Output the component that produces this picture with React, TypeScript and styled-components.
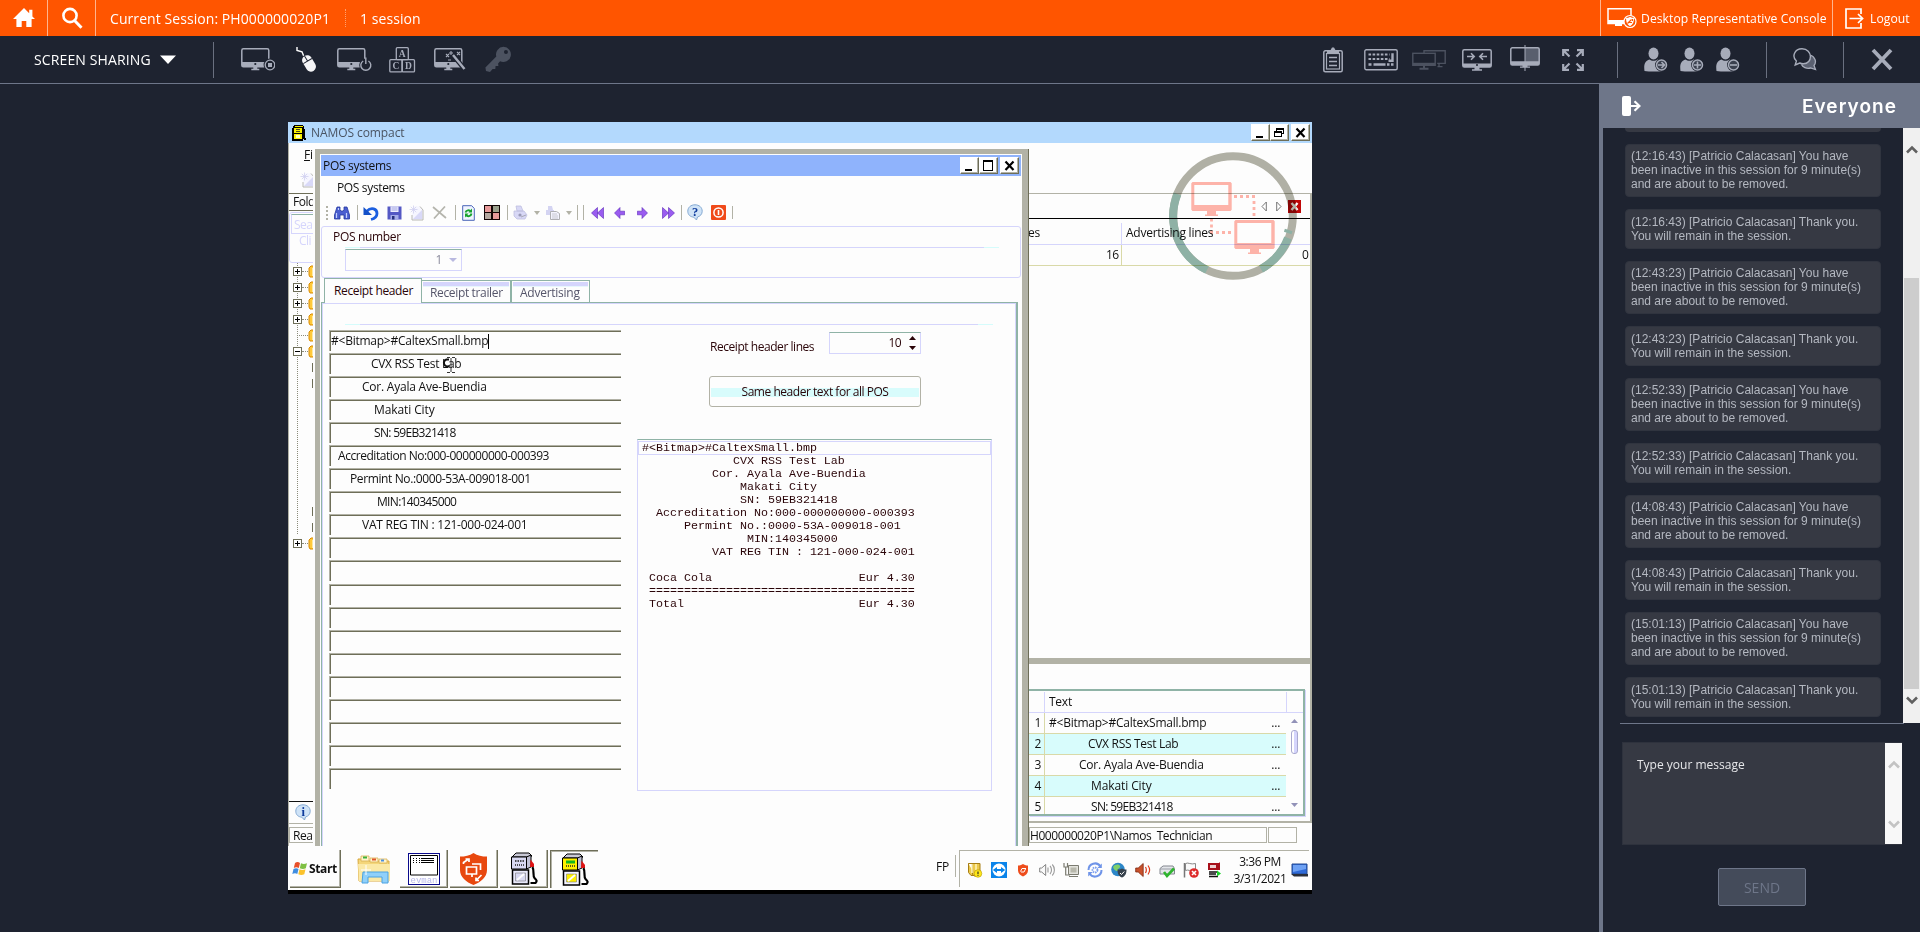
import React from 'react';
import styled, { createGlobalStyle, css } from 'styled-components';

const INK = '#a7acba';
const DIM = '#4c5260';
const STONE = '#b2b2a6';
const OLIVE = '#6e6e58';
const LAV = '#d5d5fc';
const SAGE = '#8fb3a6';
const PAPER = '#fdfdfd';
const MAROON = '#2a0408';

const Global = createGlobalStyle`
  *{box-sizing:border-box}
  body{margin:0;background:#1e2330;font-family:"Open Sans","Noto Sans",sans-serif;overflow:hidden}
  svg{display:block;flex:none}
`;

/* ---------- page shell ---------- */
const Page = styled.div`width:1920px;height:932px;display:flex;flex-direction:column;background:#1e2330;overflow:hidden;`;
const TopBar = styled.header`height:36px;flex:none;background:#ff5500;display:flex;align-items:stretch;color:#fff;`;
const TopCell = styled.div<{ $w: number; $edge?: 'l' | 'r' }>`
  width:${p => p.$w}px;display:flex;align-items:center;
  ${p => p.$edge === 'r' && css`border-right:1px solid #ffb48e;`}
  ${p => p.$edge === 'l' && css`border-left:1px solid #ffb48e;`}
`;
const IconCell = styled(TopCell)`justify-content:center;`;
const TopText = styled.span<{ $size?: number; $ml?: number }>`
  font-size:${p => p.$size ?? 14}px;letter-spacing:.07px;margin-left:${p => p.$ml ?? 0}px;white-space:pre;
`;
const DottedRule = styled.i`width:0;height:18px;border-left:1px dotted #ffa070;margin-left:15px;`;
const Spacer = styled.div`flex:1;`;
const ToolBar = styled.div`height:48px;flex:none;display:flex;align-items:center;border-bottom:1px solid #6e7689;`;
const ModeLabel = styled.div`width:213px;padding-left:34px;display:flex;align-items:center;gap:9px;color:#fff;font-size:14px;letter-spacing:.12px;`;
const Slot = styled.div<{ $ml: number }>`margin-left:${p => p.$ml}px;`;
const Rule = styled.i<{ $ml?: number }>`width:1px;height:36px;background:#6a7080;margin-left:${p => p.$ml ?? 0}px;`;
const Body = styled.div`flex:1;display:flex;min-height:0;`;
const Stage = styled.main`width:1599px;padding:38px 0 0 288px;`;

/* ---------- chat ---------- */
const Chat = styled.aside`width:321px;border-left:4px solid #6e7689;display:flex;flex-direction:column;`;
const ChatHead = styled.div`height:44px;flex:none;background:#6e7689;display:flex;align-items:center;justify-content:space-between;padding:0 23px 0 19px;`;
const ChatTitle = styled.h2`margin:0;font:600 19px Inter,sans-serif;letter-spacing:1.05px;color:#fff;`;
const ChatScroll = styled.div`height:595px;flex:none;display:flex;justify-content:space-between;overflow:hidden;`;
const Messages = styled.div`width:278px;padding-left:22px;display:flex;flex-direction:column;gap:12px;`;
const Message = styled.p<{ $lines: number }>`
  margin:0;flex:none;width:256px;border-radius:4px;background:#363943;color:#b4b8c1;
  font:12px/14px "Liberation Sans",Arial,sans-serif;white-space:pre;border:1px solid #30343f;
  height:${p => (p.$lines === 3 ? 53 : 40)}px;padding:${p => (p.$lines === 3 ? 4 : 5)}px 5px 0;
`;
const MessageTail = styled.div`height:4px;width:256px;flex:none;background:#363943;border-radius:0 0 4px 4px;`;
const ScrollBar = styled.div<{ $h: number; $bg: string; $pt: number; $pb: number }>`
  width:17px;height:${p => p.$h}px;background:${p => p.$bg};display:flex;flex-direction:column;align-items:center;
  padding:${p => p.$pt}px 0 ${p => p.$pb}px;
`;
const Thumb = styled.div`width:15px;height:411px;background:#cdcdcd;margin:124px 0 7px;`;
const ChatRule = styled.div`height:1px;flex:none;width:284px;margin-left:17px;background:#6e7689;`;
const Composer = styled.div`
  margin:18px 0 0 19px;width:280px;height:103px;flex:none;display:flex;justify-content:space-between;
  background:#363943;color:#e6e7ea;font-size:12px;padding-left:14px;border:1px solid #2e323d;border-width:1px 0 1px 1px;
`;
const Hint = styled.span`margin-top:13px;`;
const SendButton = styled.button`
  margin:23px 0 0 115px;width:88px;height:38px;border:1px solid #6e7689;border-radius:2px;background:#444b5a;
  color:#6e7689;font:14px "Open Sans",sans-serif;padding:0;
`;

/* ---------- remote desktop ---------- */
const Remote = styled.div`position:relative;width:1024px;height:772px;background:${PAPER};border-bottom:4px solid #000;overflow:hidden;font-size:12px;letter-spacing:-.25px;color:#111;display:flex;flex-direction:column;`;
const T = styled.span<{ $ls?: number; $c?: string; $ml?: number; $mt?: number; $w?: number }>`
  white-space:pre;line-height:16px;letter-spacing:${p => p.$ls ?? -.25}px;color:${p => p.$c ?? '#111'};
  margin-left:${p => p.$ml ?? 0}px;margin-top:${p => p.$mt ?? 0}px;${p => p.$w && css`width:${p.$w}px;`}
`;
const TitleBar = styled.div<{ $bg: string }>`height:21px;flex:none;background:${p => p.$bg};display:flex;align-items:center;`;
const MainWindow = styled.div`height:724px;flex:none;display:flex;flex-direction:column;`;
const MainBody = styled.div`flex:1;display:flex;justify-content:space-between;min-height:0;`;
const CaptionButtons = styled.div`margin-left:auto;display:flex;padding-right:2px;`;
const CaptionButton = styled.div<{ $gap?: boolean }>`
  width:19px;height:17px;background:#fff;border:1px solid;border-color:#fff ${OLIVE} ${OLIVE} #fff;
  box-shadow:inset -1px -1px 0 ${STONE};margin-left:${p => (p.$gap ? 2 : 0)}px;
`;

const LeftStrip = styled.div`width:25px;overflow:hidden;display:flex;flex-direction:column;border-left:1px solid ${STONE};`;
const StripMenu = styled.div`height:27px;flex:none;padding:4px 0 0 15px;display:flex;`;
const StripTools = styled.div`height:23px;flex:none;display:flex;align-items:center;padding-left:4px;padding-bottom:3px;gap:7px;`;
const FolderTab = styled.div`height:18px;flex:none;width:40px;border:1px solid ${OLIVE};border-left:0;padding-left:4px;display:flex;`;
const SearchBox = styled.div`height:51px;flex:none;margin-top:1px;border:1px solid ${LAV};width:40px;border-radius:3px;padding:1px 0 0 1px;display:flex;flex-direction:column;`;
const SearchInput = styled.div`height:20px;flex:none;border:1px solid ${LAV};border-top-color:${SAGE};padding:2px 0 0 2px;display:flex;`;
const Tree = styled.div`display:flex;flex-direction:column;height:538px;`;
const TreeRow = styled.div<{ $dots?: boolean }>`
  height:16px;flex:none;width:40px;display:flex;align-items:center;padding-left:4px;
  ${p => p.$dots && css`background:repeating-linear-gradient(180deg,#8b8b7b 0 1px,transparent 1px 2px) 8px 0/1px 16px no-repeat;`}
`;
const Toggle = styled.i`width:9px;height:9px;border:1px solid ${OLIVE};background:#fff;display:flex;`;
const Dots = styled.i<{ $w: number; $ml?: number }>`width:${p => p.$w}px;height:0;border-top:1px dotted #8b8b7b;margin-left:${p => p.$ml ?? 0}px;`;
const Mark = styled.i`width:1px;height:9px;background:${OLIVE};margin-left:19px;`;
const InfoRow = styled.div`height:23px;flex:none;border-top:1px solid #111;border-bottom:1px solid ${STONE};padding:2px 0 0 6px;`;
const StatusCell = styled.div<{ $w: number }>`width:${p => p.$w}px;height:16px;flex:none;border:1px solid ${STONE};display:flex;align-items:center;padding-top:2px;`;
const ReadyCell = styled(StatusCell)`margin-top:3px;padding-left:3px;`;

const RightPane = styled.div`width:283px;display:flex;flex-direction:column;padding-top:50px;`;
const PaneFrame = styled.div`border-top:1px solid ${STONE};border-right:2px solid ${STONE};height:630px;display:flex;flex-direction:column;border-bottom:2px solid ${STONE};`;
const NavRow = styled.div`height:25px;flex:none;border-bottom:1px solid #000;display:flex;align-items:center;justify-content:flex-end;padding-right:9px;`;
const HeadRow = styled.div`height:26px;flex:none;border-bottom:1px solid ${LAV};display:flex;align-items:center;padding-top:2px;background:linear-gradient(${LAV},${LAV}) 92px 4px/1px 22px no-repeat;`;
const DataRow = styled.div`height:21px;flex:none;border-bottom:1px solid #d9d9a8;display:flex;align-items:center;background:linear-gradient(#d9d9a8,#d9d9a8) 92px 0/1px 21px no-repeat;`;
const Splitter = styled.div`height:6px;flex:none;background:${STONE};margin-top:392px;`;
const Grid = styled.div`margin-top:25px;width:276px;height:127px;border:2px solid ${SAGE};border-left:0;display:flex;flex-direction:column;box-shadow:1px 1px 0 ${LAV};overflow:hidden;`;
const GridHead = styled.div`height:22px;flex:none;border-bottom:1px solid ${LAV};display:flex;align-items:center;`;
const GridBody = styled.div`display:flex;`;
const GridRows = styled.div`width:257px;`;
const GridRow = styled.div<{ $alt: boolean }>`
  height:21px;border-bottom:1px solid #d9d9a8;display:flex;align-items:center;background:${p => (p.$alt ? '#d8fcfc' : PAPER)};
`;
const GridNum = styled.span`width:16px;height:20px;text-align:right;padding-right:3px;border-right:1px solid #d9d9a8;line-height:19px;`;
const HeadSep = styled.i<{ $ml: number }>`width:1px;height:20px;background:${LAV};margin-left:${p => p.$ml}px;`;
const GridScroll = styled.div`width:17px;display:flex;flex-direction:column;align-items:center;padding-top:6px;`;
const GridThumb = styled.i`width:7px;height:24px;margin:7px 0 49px;border:1px solid #a9a9cf;border-radius:3px;background:linear-gradient(90deg,#fff 2px,${LAV} 2px);`;
const StatusBar = styled.div`display:flex;gap:1px;padding-top:4px;`;

/* ---------- dialog window ---------- */
const Dialog = styled.section`
  position:absolute;left:27px;top:27px;width:713px;height:697px;background:${PAPER};
  border:solid ${STONE};border-width:5px 6px 0 5px;box-shadow:1px 0 0 ${OLIVE};padding:1px 0 0 1px;display:flex;flex-direction:column;
`;
const DialogTitle = styled(TitleBar)`width:700px;`;
const DialogMenu = styled.div`height:26px;flex:none;padding:4px 0 0 16px;display:flex;`;
const DialogTools = styled.div`height:21px;flex:none;display:flex;align-items:center;padding-left:5px;`;
const Grip = styled.i`width:2px;height:14px;background:repeating-linear-gradient(180deg,${STONE} 0 2px,transparent 2px 4px);`;
const ToolSep = styled.i<{ $ml: number; $h?: number }>`width:1px;height:${p => p.$h ?? 15}px;background:${STONE};margin-left:${p => p.$ml}px;`;
const NumberPanel = styled.div`height:52px;flex:none;width:700px;margin-top:3px;border:1px solid ${LAV};border-radius:3px;padding-top:2px;display:flex;flex-direction:column;`;
const FadeRule = styled.div<{ $w: number; $mt: number; $ml: number }>`
  width:${p => p.$w}px;height:1px;flex:none;margin:${p => p.$mt}px 0 0 ${p => p.$ml}px;
  background:linear-gradient(90deg,#d5fcfc 15px,${LAV} 15px calc(100% - 15px),#d5fcfc calc(100% - 15px));
`;
const Combo = styled.div`margin:1px 0 0 23px;width:117px;height:22px;border:1px solid ${LAV};border-top-color:${SAGE};display:flex;align-items:center;justify-content:flex-end;gap:7px;padding-right:4px;`;
const Tabs = styled.div`display:flex;align-items:flex-end;height:24px;flex:none;padding-left:3px;`;
const Tab = styled.div<{ $w: number; $on?: boolean }>`
  width:${p => p.$w}px;height:${p => (p.$on ? 25 : 22)}px;border:1px solid ${SAGE};border-bottom:0;background:${PAPER};
  display:flex;align-items:center;padding-left:${p => (p.$on ? 9 : 8)}px;position:relative;z-index:1;
  ${p => p.$on ? css`margin-bottom:-1px;margin-right:0;` : css`background:linear-gradient(${LAV} 4px,#e6f6fc 4px 5px,transparent 5px) 1px 1px/calc(100% - 2px) 20px no-repeat;border-left:${p.$w > 80 ? 0 : 1}px solid ${SAGE};padding-top:3px;`}
`;
const TabPanel = styled.div`flex:1;width:697px;border:1px solid ${SAGE};border-width:1px 2px 0 1px;box-shadow:inset 1px 1px 0 ${LAV},inset -1px 0 0 ${LAV};`;
const PanelCols = styled.div`display:flex;padding-left:7px;gap:16px;margin-top:5px;`;
const Fields = styled.div`width:292px;display:flex;flex-direction:column;gap:2.06px;`;
const Field = styled.div<{ $pad: number }>`
  height:21px;flex:none;border:solid ${STONE};border-width:1px 0 0 1px;box-shadow:inset 1px 1px 0 ${OLIVE};
  padding-left:${p => p.$pad}px;display:flex;align-items:center;
`;
const Caret = styled.i`width:1px;height:15px;background:#000;`;
const Side = styled.div`width:355px;display:flex;flex-direction:column;padding-top:2px;`;
const SpinRow = styled.div`display:flex;align-items:flex-start;padding-left:73px;height:22px;justify-content:space-between;padding-right:71px;`;
const Spin = styled.div`width:92px;height:22px;border:1px solid ${LAV};border-top-color:${SAGE};display:flex;align-items:center;justify-content:flex-end;gap:8px;padding-right:4px;`;
const SpinArrows = styled.div`display:flex;flex-direction:column;gap:6px;`;
const WideButton = styled.div`
  margin:22px 0 0 72px;width:212px;height:31px;border:1px solid ${STONE};border-radius:3px;display:flex;align-items:center;justify-content:center;
  background:linear-gradient(#d8fcfc,#d8fcfc) 1px 11px/208px 9px no-repeat;
`;
const Receipt = styled.div`margin-top:32px;width:355px;height:352px;border:1px solid ${LAV};border-top-color:${SAGE};padding:2px 1px 0;`;
const ReceiptLine = styled.div<{ $sel: boolean }>`
  height:13px;padding-left:3px;white-space:pre;font:11.667px/13px "Liberation Mono","Courier New",monospace;letter-spacing:0;color:${MAROON};
  ${p => p.$sel && css`box-shadow:0 0 0 1px ${LAV};height:12px;margin-bottom:1px;`}
`;
const Cursor = styled.div`position:absolute;left:154px;top:235px;`;
const Watermark = styled.div`position:absolute;left:881px;top:30px;mix-blend-mode:multiply;`;

/* ---------- taskbar ---------- */
const TaskBar = styled.div`height:44px;flex:none;display:flex;align-items:flex-start;padding:4px 3px 0 2px;`;
const StartButton = styled.div`width:51px;height:38px;border:solid ${OLIVE};border-width:0 1px 1px 0;box-shadow:inset -1px -1px 0 ${STONE};display:flex;align-items:center;gap:1px;padding-left:2px;font-weight:700;letter-spacing:-.35px;`;
const Task = styled.div<{ $kind: 'flat' | 'up' | 'down' }>`
  width:48px;height:38px;margin-right:2px;display:flex;align-items:center;justify-content:center;
  ${p => p.$kind === 'up' && css`border:solid ${OLIVE};border-width:0 1px 1px 0;box-shadow:inset -1px -1px 0 ${STONE};`}
  ${p => p.$kind === 'down' && css`border:solid ${OLIVE};border-width:1px 0 0 1px;box-shadow:inset 1px 1px 0 ${STONE};`}
`;
const TaskList = styled.div`display:flex;margin-left:9px;`;
const Lang = styled.div`margin-left:auto;width:20px;height:22px;margin-top:5px;border-right:1px solid ${STONE};display:flex;align-items:center;`;
const Tray = styled.div`margin-left:3px;width:350px;height:37px;border:solid ${STONE};border-width:1px 0 0 1px;display:flex;align-items:center;padding:2px 1px 0 7px;`;
const TrayIcons = styled.div`display:flex;gap:8px;`;
const Clock = styled.div`width:62px;text-align:center;line-height:17px;letter-spacing:-.45px;margin:0 1px 0 7px;`;

/* ---------- session icons ---------- */
const HomeIcon = () => <svg width="24" height="22" viewBox="0 0 24 22"><path fill="#fff" d="M12 1 1 12h3.4v8h5.3v-6h4.6v6h5.3v-8H23l-2.6-2.6V2.8h-3.2v3.4z" /></svg>;
const SearchIcon = () => <svg width="22" height="22" viewBox="0 0 22 22" fill="none" stroke="#fff"><circle cx="9" cy="8.5" r="6.6" strokeWidth="2.6" /><path d="m13.5 13.5 7 7.2" strokeWidth="3" /></svg>;
const MonitorShape = ({ c = INK }: { c?: string }) => <><rect x=".8" y="1.8" width="27" height="18" rx="1.6" fill="none" stroke={c} strokeWidth="1.5" /><path fill={c} d="M1 15h27v4.8H1z" /><circle cx="14.3" cy="17" r="1.1" fill="#1e2330" /><path fill={c} d="M12.3 20h4v1.8h2v1.4h-8v-1.4h2z" /></>;
const ViewScreenIcon = () => <svg width="34" height="26" viewBox="0 0 34 26"><MonitorShape /><circle cx="29" cy="18" r="6.4" fill="#1e2330" /><circle cx="29" cy="18" r="4.8" fill="none" stroke={INK} strokeWidth="1.3" /><rect x="27" y="16" width="4" height="4" fill={INK} /></svg>;
const MouseIcon = () => <svg width="24" height="26" viewBox="0 0 24 26"><path d="M2 0v3.4l5 1.4 1.6 4" fill="none" stroke="#fff" strokeWidth="1.4" /><g transform="rotate(-31 14 16)"><rect x="8.8" y="7.6" width="10" height="17.5" rx="5" fill="#f5f5f7" /><path d="M8.800 13.600h10M13.800 7.600v6" stroke="#1e2330" strokeWidth="1" /></g></svg>;
const PowerScreenIcon = () => <svg width="35" height="26" viewBox="0 0 35 26"><MonitorShape /><circle cx="28.800" cy="18" r="6.600" fill="#1e2330" /><path d="M26.200 14a5 5 0 1 0 5.200 0" fill="none" stroke={INK} strokeWidth="1.400" /><path d="M28.800 10.500v6.600" stroke={INK} strokeWidth="1.400" /></svg>;
const BlocksIcon = () => <svg width="27" height="26" viewBox="0 0 27 26" fill="none" stroke={INK} strokeWidth="1.300"><rect x="7.300" y=".7" width="12" height="12" rx="1" /><rect x=".8" y="12.700" width="12.200" height="12.200" rx="1" /><rect x="13.300" y="12.700" width="12.200" height="12.200" rx="1" /><g fill={INK} stroke="none" fontFamily="Liberation Serif" fontWeight="700" fontSize="9.500" textAnchor="middle"><text x="13.300" y="10">A</text><text x="7" y="22">C</text><text x="19.500" y="22">D</text></g></svg>;
const WandIcon = () => <svg width="32" height="26" viewBox="0 0 32 26"><MonitorShape /><path d="m19 8 11.500 14" stroke="#1e2330" strokeWidth="5" /><path d="m19 8 11.500 14" stroke={INK} strokeWidth="2.400" /><path d="m12 7 3 3m0-3-3 3M17 4v4m-2-2h4M23 5l3 3m0-3-3 3M14 13h3" stroke={INK} strokeWidth="1.100" /></svg>;
const KeyIcon = () => <svg width="27" height="27" viewBox="0 0 27 27"><path fill={DIM} fillRule="evenodd" d="M18.500.800a7.600 7.600 0 1 1-3.400 14.500l-2 2.100.3 2.600-2.800.1-.3 2.800-2.700.2L5 26l-4-1-.6-3.400 10.900-11A7.700 7.700 0 0 1 18.500.800zm2.400 3.200a2 2 0 1 0 .1 4 2 2 0 0 0-.1-4z" /></svg>;
const ClipboardIcon = () => <svg width="20" height="26" viewBox="0 0 20 26"><rect x=".8" y="3.800" width="18.400" height="21" rx="1.500" fill="none" stroke={INK} strokeWidth="1.500" /><rect x="3.500" y="6.500" width="13" height="15.500" fill="none" stroke={INK} strokeWidth="1.200" /><path fill={INK} d="M4 6.500V4h3L9 .500h2L13 4h3v2.500z" /><path d="M6 10.500h8M6 14.500h8M6 18.500h8" stroke={INK} strokeWidth="1.600" /></svg>;
const KeyboardIcon = () => <svg width="34" height="22" viewBox="0 0 34 22" fill="none" stroke={INK}><rect x=".8" y=".8" width="32.400" height="20" rx="1.500" strokeWidth="1.400" /><path strokeWidth="2.200" strokeDasharray="2.600 1.500" d="M4.500 5.500h21M4.500 10h21" /><path strokeWidth="2.400" d="M28.500 4.300v7.500h-4M4.500 15.500h3M9.500 15.500h12M23 15.500h2.500M27 15.500h2.500" /></svg>;
const MultiMonitorIcon = () => <svg width="34" height="20" viewBox="0 0 34 20" fill="none" stroke={DIM} strokeWidth="1.400"><path d="M12 3V.800h21.200v12.600h-8M27 13.400v3.200m-1.500 0h5" /><rect x=".8" y="3.300" width="22.400" height="12" /><path d="M.8 14h22.400" strokeWidth="2.400" /><path d="M12 15v3M7.500 18.800h9" strokeWidth="2" /></svg>;
const FitIcon = () => <svg width="30" height="22" viewBox="0 0 30 22"><rect x=".8" y=".8" width="28.400" height="17.200" rx="1.500" fill="none" stroke={INK} strokeWidth="1.500" /><path fill={INK} d="M1 14.500h28v3.500H1zM12.500 18h5v2.300h2.500v1.400H10v-1.400h2.500z" /><circle cx="15" cy="16" r="1" fill="#1e2330" /><path d="M5 7.500h7m-3-3.200 3.200 3.200L9 10.700M25 7.500h-7m3-3.200-3.200 3.200 3.200 3.200" fill="none" stroke={INK} strokeWidth="1.600" /></svg>;
const SplitIcon = () => <svg width="30" height="30" viewBox="0 0 30 30"><rect x="15" y="3" width="14" height="14" fill="#595f6e" /><rect x=".8" y="2.800" width="28.400" height="17.200" rx="1.500" fill="none" stroke={INK} strokeWidth="1.500" /><path fill={INK} d="M1 16.200h28v3.800H1zM12.500 20h5v1.600H20v1.200H10v-1.200h2.500z" /><path d="M15 0v26" stroke={INK} /></svg>;
const ExpandIcon = () => <svg width="22" height="22" viewBox="0 0 22 22" fill="none" stroke={INK} strokeWidth="2.200"><path d="M1.200 7V1.200H7M1.500 1.500l6 6M15 1.200h5.800V7M20.500 1.500l-6 6M1.200 15v5.800H7M1.500 20.500l6-6M15 20.800h5.800V15M20.500 20.500l-6-6" /></svg>;
const PersonIcon = ({ sign }: { sign: 'arrow' | 'plus' | 'minus' }) => <svg width="24" height="25" viewBox="0 0 24 25"><ellipse cx="9.500" cy="6.500" rx="5" ry="6" fill={INK} /><path fill={INK} d="M.5 24c-.8-6 0-10 5-11.500 2 1.800 6 1.800 8 0 5 1.500 5.500 5.500 5.200 11.500-5 .8-13 .8-18.200 0z" /><circle cx="17.500" cy="18" r="6.400" fill="#1e2330" /><circle cx="17.500" cy="18" r="5" fill="#3a404e" stroke={INK} strokeWidth="1.500" /><path stroke={INK} fill="none" strokeWidth="1.600" d={sign === 'plus' ? 'M17.500 14.500v7M14 18h7' : sign === 'minus' ? 'M14 18h7' : 'M14 18h6.500m-3-3 3 3-3 3'} /></svg>;
const ChatIcon = () => <svg width="24" height="23" viewBox="0 0 24 23"><path d="M17 7c5 1.500 7 7 4 10.500l1.500 4-5-1.500c-4 1-8-1-9-3.500" fill="#5a6070" stroke={INK} strokeWidth="1.300" /><path d="M9 .8c11 0 11 15 1.200 15-1.500 0-2.500-.3-3.500-.8l-4.500 2 1.200-4C-1.500 8.500 1.500.8 9 .8z" fill="#1e2330" stroke={INK} strokeWidth="1.400" /></svg>;
const CrossIcon = () => <svg width="22" height="23" viewBox="0 0 22 23"><path d="m2 2 18 19M20 2 2 21" stroke={INK} strokeWidth="3.800" /></svg>;
const ConsoleIcon = () => <svg width="30" height="22" viewBox="0 0 30 22"><path d="M17 16.500H1V1.800h23V9" fill="none" stroke="#fff" strokeWidth="1.500" /><path fill="#fff" d="M1 13h16v4H1zM8 17h7v2H8z" /><circle cx="23" cy="14.500" r="6" fill="#ff5500" stroke="#fff" strokeWidth="1.200" /><path d="M23 9.800c2 1.200 3 1.200 4 1.200 0 4-1 6.500-4 8.200-3-1.700-4-4.200-4-8.200 1 0 2.500 0 4-1.200z" fill="#fff" /><path d="m20.500 16.500 4-4m.5 3h-3m3.500-1.500V12" stroke="#ff5500" strokeWidth="1.100" fill="none" /></svg>;
const LogoutIcon = () => <svg width="19" height="21" viewBox="0 0 19 21" fill="none" stroke="#fff" strokeWidth="1.700"><path d="M16 6V1H1v19h15v-5" /><path d="M4.500 10.500h13m-4.500-4.500 4.600 4.500-4.600 4.500" /></svg>;
const CollapseIcon = () => <svg width="19" height="20" viewBox="0 0 19 20"><rect x="0" y="0" width="9" height="20" rx="2" fill="#fff" /><path d="M6 10h11.500M12.500 5.200l5 4.800-5 4.800" fill="none" stroke="#fff" strokeWidth="2.200" /></svg>;
const Chevron = ({ c, down }: { c: string; down?: boolean }) => <svg width="12" height="9" viewBox="0 0 12 9"><path d={down ? 'm1 1.500 5 5 5-5' : 'm1 7.500 5-5 5 5'} fill="none" stroke={c} strokeWidth="2.600" /></svg>;

/* ---------- desktop icons ---------- */
const MiniPump = () => <svg width="14" height="16" viewBox="0 0 14 16" shapeRendering="crispEdges"><path d="M2 0h9l1 2v2h1v9h1v2h-2v-1h-1v2H0V3h1V1z" fill="#000" /><path d="M3 1h8v1H3zM2 3h8v5H2zM2 9h8v5H2z" fill="#f7f000" /><path d="M4 4h4v1H4zM4 6h4v1H4z" fill="#4a4a20" /><path d="M4 10h4v3H4z" fill="#ffffc0" /></svg>;
const MinGlyph = () => <svg width="17" height="15" shapeRendering="crispEdges"><path d="M4 11h7v2H4z" /></svg>;
const MaxGlyph = () => <svg width="17" height="15" shapeRendering="crispEdges"><path d="M3 2h10v11H3zM4 4v8h8V4z" fillRule="evenodd" /></svg>;
const RestoreGlyph = () => <svg width="17" height="15" shapeRendering="crispEdges"><path d="M5 3h8v6h-2v3H3V6h2zM6 5v1h5v2h1V5zM4 8v3h6V8z" fillRule="evenodd" /></svg>;
const CloseGlyph = () => <svg width="17" height="15"><path d="m4.500 3.500 8 8.500m0-8.500-8 8.500" stroke="#000" strokeWidth="2.200" /></svg>;
const ToggleGlyph = ({ plus }: { plus: boolean }) => <svg width="7" height="7" shapeRendering="crispEdges"><path d={plus ? 'M1 3h5v1H1zM3 1h1v5H3z' : 'M1 3h5v1H1z'} /></svg>;
const FolderBit = () => <svg width="8" height="13" viewBox="0 0 8 13"><path d="M1 3 3 1h5v11H2L1 10z" fill="#ffc93a" stroke="#d98a00" /><path d="M4 3h4v8H4z" fill="#ffe9a0" /></svg>;
const InfoIcon = ({ glyph }: { glyph: string }) => <svg width="16" height="17" viewBox="0 0 16 17"><path d="M8 .8c4.200 0 7.200 2.600 7.200 6.400 0 3-2 5-4.700 5.800L9.500 16l-2.700-2.800C3 12.800.8 10.600.8 7.200.8 3.400 3.800.8 8 .8z" fill="#cfe3f7" stroke="#84a9d2" /><text x="8" y="12" fontSize="12.500" fontWeight="700" fontFamily="Liberation Serif" textAnchor="middle" fill="#0d3a9c">{glyph}</text></svg>;
const Binoculars = () => <svg width="16" height="14" viewBox="0 0 16 14"><path d="M3 1h3v3l1 1h2l1-1V1h3l2.500 8v4H10V9H6v4H.5V9z" fill="#4a5ed0" stroke="#2337a0" strokeWidth=".8" /><path d="M2.500 7v5M12.500 7v5M4.500 2v2" stroke="#c4d0ff" strokeWidth="1.200" /></svg>;
const Undo = () => <svg width="16" height="16" viewBox="0 0 16 16"><path d="M3.500 6.500c5-5 10.500-2.500 10.500 2S10 14 8 14.500" fill="none" stroke="#1c5fe0" strokeWidth="2.800" /><path d="M.5 2v8H9z" fill="#1450c8" /></svg>;
const Floppy = () => <svg width="15" height="14" viewBox="0 0 15 14"><path d="M.5.5h14v13H.5z" fill="#5458c4" /><path d="M3.500.5h8V6h-8z" fill="#eef" /><path d="M3.500 9h8v4.500h-8z" fill="#a5abe8" /><path d="M4.500 2h6M4.500 4h6" stroke="#8c90d8" strokeWidth=".8" /><path d="M5 10h2.500v3.500H5z" fill="#26307c" /></svg>;
const NewDoc = () => <svg width="15" height="16" viewBox="0 0 15 16"><path d="M5 1.500h6L14 5v10H3V9z" fill="#f6f6ff" /><path d="M3 10v5h11V5l-3-3.500" fill="none" stroke="#b9b9b4" /><path d="M4 14 13 5v9z" fill="#d9d9f8" /><path d="M4.500.5v8M.5 4.500h8M1.800 1.800l5.400 5.400M7.200 1.800 1.800 7.200" stroke="#d0d0f0" strokeWidth=".8" /></svg>;
const GreyX = () => <svg width="15" height="13" viewBox="0 0 15 13"><path d="m1 1 13 11M13 .5 2 12.500" stroke="#b5b5ad" strokeWidth="1.700" /></svg>;
const Refresh = () => <svg width="13" height="16" viewBox="0 0 13 16"><path d="M.7.700h9L12.300 3.500v11.800H.7z" fill="#f0f4ff" stroke="#4a66b8" /><path d="M3.500 7.500c.5-2.500 4-3 5.200-1M9.500 8.500c-.5 3-4 3.500-5.500 1.500" fill="none" stroke="#16a22c" strokeWidth="1.900" /><path d="M10 3.500v4H6.500zM3 12.500v-4h3.500z" fill="#16a22c" /></svg>;
const Windows4 = () => <svg width="16" height="15" viewBox="0 0 16 15" shapeRendering="crispEdges"><path fill="#120404" d="M0 0h16v15H0z" /><path fill="#e79a9a" d="M1 1h6v6H1zM9 8h6v6H9z" /><path fill="#9aa08c" d="M9 1h6v6H9z" /><path fill="#b4a8a0" d="M1 8h6v6H1z" /></svg>;
const Printer = () => <svg width="15" height="15" viewBox="0 0 15 15"><path d="M3 1h5l2 5H4zM1 6h10l3 4-2 4H4L1 11z" fill="#d8d8f6" stroke="#bfbfe0" strokeWidth=".8" /><circle cx="7" cy="10" r="1.600" fill="#9a9ab8" /><path d="m8 12 5-2" stroke="#a8a8b4" /></svg>;
const PrintList = () => <svg width="15" height="15" viewBox="0 0 15 15"><path d="M1 5h8v5H1zM3 1h4l1 4H3z" fill="#d4d4f2" /><path d="M5.500 6.500h6l3 2v6h-9z" fill="#f4f4ff" stroke="#b0b0b4" /><path d="M7 9h5M7 11h6M7 13h6" stroke="#bdbdc4" strokeWidth=".8" /></svg>;
const Drop = ({ c = STONE, w = 6 }: { c?: string; w?: number }) => <svg width={w} height="4" viewBox="0 0 6 4" preserveAspectRatio="none"><path d="M0 0h6L3 4z" fill={c} /></svg>;
const UpTri = ({ c, w = 7 }: { c: string; w?: number }) => <svg width={w} height="4" viewBox="0 0 6 4" preserveAspectRatio="none"><path d="M0 4h6L3 0z" fill={c} /></svg>;
const Arrow = ({ dir, dbl }: { dir: 1 | -1; dbl?: boolean }) => <svg width={dbl ? 13 : 11} height="12" viewBox={dbl ? '0 0 13 12' : '0 0 11 12'}><g transform={dir < 0 ? '' : `translate(${dbl ? 13 : 11} 0) scale(-1 1)`} fill="#9a5cf0" stroke="#5a2ab8" strokeWidth=".6">{dbl ? <path d="M.5 6 6.500.500v11zM6.500 6l6-5.500v11z" /> : <path d="M.5 6 6 .5v3.700h4.700v3.600H6v3.700z" />}</g></svg>;
const StopIcon = () => <svg width="15" height="15" viewBox="0 0 15 15"><rect width="15" height="15" rx="1" fill="#f04a1a" /><circle cx="7.500" cy="7.500" r="4.600" fill="none" stroke="#fff" strokeWidth="1.500" /><path d="M7.500 5v5" stroke="#fff" strokeWidth="1.600" /></svg>;
const NavTri = ({ right }: { right?: boolean }) => <svg width="6" height="11" viewBox="0 0 6 11"><path d={right ? 'M.7 1v9L5 5.500z' : 'M5.300 1v9L1 5.500z'} fill="#fff" stroke="#777" /></svg>;
const RedClose = () => <svg width="13" height="13" viewBox="0 0 13 13"><path d="M0 0h13v13H0z" fill="#c00808" /><path d="m3.500 3 6 7m0-7-6 7" stroke="#fff" strokeWidth="2.400" /></svg>;

const WatermarkMonitor = ({ x, y }: { x: number; y: number }) => <g transform={`translate(${x} ${y})`} fill="#ffb5aa"><path fillRule="evenodd" d="M1.500 0h38l1.200 1.200v26.500l-1.200 1.300h-38L.3 27.700V1.200zM3.300 3v20h34V3z" /><path d="M16 29h9v3.500h2V34H14v-1.500h2z" /></g>;
const WatermarkArt = () => (
  <svg width="128" height="128" viewBox="0 0 128 128">
    <circle cx="64" cy="64" r="59.800" fill="none" stroke={STONE} strokeWidth="8" />
    <path d="M8.500 42A59.800 59.800 0 0 0 38 118M119 86A59.800 59.800 0 0 1 92 117M119.700 78l-1 3" fill="none" stroke={SAGE} strokeWidth="8" />
    <WatermarkMonitor x={22} y={30} /><WatermarkMonitor x={65} y={68} />
    <path d="M65 44.500h21.500M85 49v16M42.500 66.500V80M41 80.500h24" fill="none" stroke="#ffb5aa" strokeWidth="2.800" strokeDasharray="3 3" />
  </svg>
);

/* ---------- taskbar icons ---------- */
const Flag = () => <svg width="16" height="15" viewBox="0 0 16 15"><path d="M3 2c2-1.500 3.500-1 5 0L6.800 7C5 6 3.500 6 1.800 7z" fill="#e8502a" /><path d="M9 2.300c2 1 3.500 1 6 0L13.800 7.200c-2 1-3.800 1-6 0z" fill="#7fc043" /><path d="M1.500 8c2-1.200 3.500-1 5 0l-1.200 5C4 12 2 12 .3 13z" fill="#3f8de0" /><path d="M7.500 8.300c2 1 3.500 1 6 0l-1.200 4.900c-2 1-3.800 1-6 0z" fill="#fcc32c" /></svg>;
const ExplorerIcon = () => <svg width="34" height="32" viewBox="0 0 34 32"><path d="M1 6h9l2 2h20v20H2z" fill="#f4d67a" stroke="#d9a83c" /><path d="M1 11h32v17H2z" fill="#fbe9a6" /><path d="M4 3h8v5H4zM13 5h8v4h-8zM22 6h8v4h-8z" fill="#fff4cc" stroke="#d8b050" strokeWidth=".8" /><path d="M6 3.500h4v2H6z" fill="#3cb23c" /><path d="M15 5.500h4v2h-4z" fill="#e0572c" /><path d="M24 6.500h3v2h-3z" fill="#4a8ee0" /><path d="M6 19h25v11h-6v-6H11v6H5z" fill="#8fd0fa" stroke="#4aa2e2" /><path d="M9 12v10M4 17h10" stroke="#fff" /></svg>;
const EvmanIcon = () => <svg width="32" height="32" viewBox="0 0 32 32"><path d="M0 0h32v32H0z" fill="#0a0a8c" /><path d="M1 1h30v30H1z" fill="#fff" /><path d="M2.500 2.500h27V22h-27z" fill="#fff" stroke="#000" /><path d="M5 5.500h7M5 7.500h7M5 9.500h7" stroke="#000" strokeDasharray="1 2" /><path d="M13 5.500h13M13 7.500h13M13 9.500h13" stroke="#000" /><text x="16" y="30" textAnchor="middle" fontSize="9" fontFamily="Liberation Mono" letterSpacing="0" fill="#b8b8ea">evman</text></svg>;
const ShieldIcon = () => <svg width="27" height="32" viewBox="0 0 27 32"><path d="M13.500 0c4 2.800 8.500 3.600 13.500 3.600V17c0 7-6 12-13.500 15C6 29 0 24 0 17V3.600C5 3.600 9.500 2.800 13.500 0z" fill="#e8480f" /><path d="M6.500 14h10v7h-10zM12 21v3M3.500 11V9.500L8 6.500M5.500 6H9v3M12 11h8.500v6M16 24.500v3h3M16.500 27l5-5" fill="none" stroke="#fff" strokeWidth="1.700" /></svg>;
const PumpIcon = ({ hot }: { hot?: boolean }) => {
  const a = hot ? '#fff000' : '#d9d9f2';
  return <svg width="28" height="33" viewBox="0 0 28 33"><path d="M6 1h13l3 3-3 1H2z" fill="#c9c9d6" stroke="#000" /><path d="M1.500 5h15v12h-15z" fill={a} stroke="#000" /><path d="M16.500 5 21 3v12l-4.500 2z" fill="#c0c0d4" stroke="#000" /><path d="M2.500 18h16v14h-16z" fill={hot ? '#f4f4ff' : '#e8e8fb'} stroke="#000" strokeWidth="1.500" /><path d="M5.500 21h10v8h-10z" fill={a} stroke="#777" strokeWidth=".6" /><path d="m7 28 7-6" stroke="#fff" strokeWidth="2" /><path d="M5 9h9" stroke={hot ? '#16b81e' : '#222'} strokeWidth={hot ? 3 : 1.5} strokeDasharray={hot ? '0' : '1.5 1'} /><path d="M5 13h9" stroke="#222" strokeDasharray="1 1" strokeWidth="1.500" /><path d="M20.500 7.500 24 12v3h-4z" fill="#e01414" /><path d="M22.500 15c2 4 0 9 2 11s3 3 1 5h-5" fill="none" stroke="#000" strokeWidth="2.200" /></svg>;
};
const svg16 = { width: 16, height: 16, viewBox: '0 0 16 16' };
const TrayArt = () => <>
  <svg {...svg16}><path d="M1.500 1.500h4v11l2 1.500H13V1.500H1.500v9l2.500 3h4" fill="#ecc94a" stroke="#a87f14" /><path d="M5 2v9M9 2v9" stroke="#fff4b8" strokeWidth="1.500" /><circle cx="11" cy="11.500" r="3.800" fill="#ffe71a" stroke="#b59a00" strokeWidth=".6" /><path d="M11 9.500v2.500m0 .8v1" stroke="#222" strokeWidth="1.100" /></svg>
  <svg {...svg16}><rect width="16" height="16" fill="#0a84ea" /><circle cx="8" cy="8" r="6.500" fill="#fff" /><path d="M1.800 8 6 5v2h4V5l4.200 3L10 11V9H6v2z" fill="#0a84ea" /></svg>
  <svg {...svg16}><path d="M8 2c2 1.200 3.500 1.500 5 1.500v5c0 3-2.500 5-5 6-2.500-1-5-3-5-6v-5C4.500 3.500 6 3.200 8 2z" fill="#ee4d1c" /><path d="M5.500 9.500 7 6.500h4M10.500 7l-1.500 3H6" stroke="#fff" fill="none" /></svg>
  <svg {...svg16}><path d="M.7 6v4h2l4 3.500v-11L2.700 6z" fill="#fafafa" stroke="#777" strokeWidth=".9" /><path d="M9 5.500v5M11 4c2 2 2 6 0 8M13.300 2.500c2.800 3 2.800 8 0 11" fill="none" stroke="#999" strokeWidth="1.100" /></svg>
  <svg {...svg16}><path d="M5.500 3.500h10v9h-10z" fill="#e2e2dc" stroke="#7b7b70" /><path d="M7.500 5.500h6v5h-6z" fill="#b8b8ac" /><path d="M1 1v4h3.500V1M2.700 5v8H7M6 14.500h9" stroke="#7b7b70" fill="none" strokeWidth="1.200" /></svg>
  <svg {...svg16}><path d="M13.500 4.500A6.500 6.500 0 0 0 1.500 8M2.500 11.500A6.500 6.500 0 0 0 14.500 8" fill="none" stroke="#6f94e8" strokeWidth="2" /><path d="M14.800 1.500V6h-4.500zM1.200 14.500V10h4.500z" fill="#6f94e8" /><circle cx="8" cy="8" r="2.500" fill="none" stroke="#7a9ef0" strokeWidth="1.800" strokeDasharray="1.500 .8" /></svg>
  <svg {...svg16}><circle cx="7" cy="7.500" r="6.800" fill="#2c86c8" /><path d="M2 5c2-3 6-3 7-1s-2 2-2 4-4 1-5-3z" fill="#7ed06a" /><path d="M11 6.500c1.500 1 3 1 4.500 1 0 4-1 6.500-4.500 8-3.500-1.500-4.500-4-4.500-8 1.500 0 3 0 4.500-1z" fill="#36414c" /><path d="m9 11 1.500 1.500 2.800-3" stroke="#fff" fill="none" /></svg>
  <svg {...svg16}><path d="M.7 6v4h2.500l5 4.500v-13L3.200 6z" fill="#c9512c" stroke="#7c2a12" strokeWidth=".8" /><path d="M10.500 5c1 1.800 1 4.200 0 6M13 3.500c2 2.800 2 6.200 0 9" fill="none" stroke="#dd3a1a" strokeWidth="1.200" /></svg>
  <svg {...svg16}><path d="M1 6.500 4 4h10l1.500 2.500V12H1z" fill="#e4e6ea" stroke="#83878f" /><path d="M1 7h14" stroke="#9a9ea6" /><path d="m5 10 3 4 7-7.500" fill="none" stroke="#2fb52f" strokeWidth="2.600" /></svg>
  <svg {...svg16}><path d="M1.500 1v14.500" stroke="#777" strokeWidth="1.500" /><path d="M2.500 1.500c3-1.500 5 1.500 10 0v7c-5 1.500-7-1.500-10 0z" fill="#fafafa" stroke="#888" /><circle cx="11" cy="11" r="4.800" fill="#dd2a2a" /><path d="m9 9 4 4m0-4-4 4" stroke="#fff" strokeWidth="1.600" /></svg>
  <svg {...svg16}><path d="M1 1h11l1-1v8H1z" fill="#a80f1a" /><path d="M3 3h6v3H3z" fill="#fff" opacity=".8" /><path d="M2 10h9M2 12h7M2 14.500h9" stroke="#111" strokeWidth="1.400" /><path d="M10 8.500v6l4-3z" fill="#19d42a" /></svg>
</>;
const DisplayIcon = () => <svg width="17" height="15" viewBox="0 0 17 15"><path d="M1 1h15v10H1z" fill="#2f6ad8" stroke="#274a90" /><path d="M2 2h13v4L2 9z" fill="#6fa2f4" /><path d="M0 11h17v2.500H3z" fill="#2b2f3a" /></svg>;

/* ---------- data ---------- */
const chatLog: [string, boolean][] = [
  ['12:16:43', true], ['12:16:43', false], ['12:43:23', true], ['12:43:23', false], ['12:52:33', true],
  ['12:52:33', false], ['14:08:43', true], ['14:08:43', false], ['15:01:13', true], ['15:01:13', false],
];
const warnText = 'You have\nbeen inactive in this session for 9 minute(s)\nand are about to be removed.';
const okText = 'Thank you.\nYou will remain in the session.';

const headerFields: { text: string; x: number; ls?: number }[] = [
  { text: '#<Bitmap>#CaltexSmall.bmp', x: 1, ls: -.24 },
  { text: 'CVX RSS Test Lab', x: 41, ls: -.3 },
  { text: 'Cor. Ayala Ave-Buendia', x: 32, ls: -.22 },
  { text: 'Makati City', x: 44, ls: -.1 },
  { text: 'SN: 59EB321418', x: 44, ls: -.68 },
  { text: 'Accreditation No:000-000000000-000393', x: 8, ls: -.45 },
  { text: 'Permint No.:0000-53A-009018-001', x: 20, ls: -.38 },
  { text: 'MIN:140345000', x: 47, ls: -.68 },
  { text: 'VAT REG TIN : 121-000-024-001', x: 32, ls: -.25 },
  ...Array.from({ length: 11 }, () => ({ text: '', x: 0 })),
];
const sp = (n: number, s: string) => ' '.repeat(n) + s;
const receipt = [
  '#<Bitmap>#CaltexSmall.bmp', sp(13, 'CVX RSS Test Lab'), sp(10, 'Cor. Ayala Ave-Buendia'), sp(14, 'Makati City'),
  sp(14, 'SN: 59EB321418'), sp(2, 'Accreditation No:000-000000000-000393'), sp(6, 'Permint No.:0000-53A-009018-001'),
  sp(15, 'MIN:140345000'), sp(10, 'VAT REG TIN : 121-000-024-001'), '',
  ' Coca Cola' + sp(21, 'Eur 4.30'), ' ' + '='.repeat(38), ' Total' + sp(25, 'Eur 4.30'),
];
const gridPads = [4, 43, 34, 46, 46];
const treeRows = ['+', '+', '+', '+', 'f', '-', '|', '|', '', '', '', '', '', '', '', '|', '|', '+'];

const Caption = ({ restore }: { restore?: boolean }) => (
  <CaptionButtons>
    <CaptionButton><MinGlyph /></CaptionButton>
    <CaptionButton>{restore ? <RestoreGlyph /> : <MaxGlyph />}</CaptionButton>
    <CaptionButton $gap><CloseGlyph /></CaptionButton>
  </CaptionButtons>
);

const NavigatorStrip = () => (
  <LeftStrip>
    <StripMenu><T><u>F</u>i</T></StripMenu>
    <StripTools><Grip /><NewDoc /></StripTools>
    <FolderTab><T $ls={-.5}>Fol</T><T $ls={-.5}>d</T></FolderTab>
    <SearchBox><SearchInput><T $c={LAV} $ls={-.5}>Sea</T></SearchInput><T $c={LAV} $ml={8} $mt={-1} $ls={-.5}>Cli</T></SearchBox>
    <Tree>
      {treeRows.map((r, i) => (
        <TreeRow key={i} $dots={i < 17}>
          {(r === '+' || r === '-') && <><Toggle><ToggleGlyph plus={r === '+'} /></Toggle><Dots $w={6} /><FolderBit /></>}
          {r === 'f' && <><Dots $w={11} $ml={4} /><FolderBit /></>}
          {r === '|' && <Mark />}
        </TreeRow>
      ))}
    </Tree>
    <InfoRow><InfoIcon glyph="i" /></InfoRow>
    <ReadyCell $w={40}><T $ls={-.5}>Rea</T></ReadyCell>
  </LeftStrip>
);

const OverviewPane = () => (
  <RightPane>
    <PaneFrame>
      <NavRow><NavTri /><Slot $ml={9}><NavTri right /></Slot><Slot $ml={6}><RedClose /></Slot></NavRow>
      <HeadRow><T $ml={-1} $w={98}>es</T><T $ls={-.25}>Advertising lines</T></HeadRow>
      <DataRow><T $ml={77} $w={192} $ls={-.7}>16</T><T $ml={4}>0</T></DataRow>
      <Splitter />
      <Grid>
        <GridHead><HeadSep $ml={15} /><T $ml={4}>Text</T><HeadSep $ml={214} /></GridHead>
        <GridBody>
          <GridRows>
            {headerFields.slice(0, 5).map((f, i) => (
              <GridRow key={i} $alt={i % 2 === 1}>
                <GridNum>{i + 1}</GridNum><T $ml={gridPads[i]} $ls={f.ls}>{f.text}</T><Spacer /><T $ls={-.2}>...  </T>
              </GridRow>
            ))}
          </GridRows>
          <GridScroll><UpTri c="#9292b8" /><GridThumb /><Drop c="#9292b8" w={7} /></GridScroll>
        </GridBody>
      </Grid>
    </PaneFrame>
    <StatusBar><StatusCell $w={238}><T $ls={-.42}>H000000020P1\Namos  Technician</T></StatusCell><StatusCell $w={29} /></StatusBar>
  </RightPane>
);

const PosDialog = () => (
  <Dialog>
    <DialogTitle $bg="#8fb3fc"><T $ml={2} $ls={-.3}>POS systems</T><Caption /></DialogTitle>
    <DialogMenu><T $ls={-.35}>POS systems</T></DialogMenu>
    <DialogTools>
      <Grip />
      <Slot $ml={6}><Binoculars /></Slot><ToolSep $ml={7} />
      <Slot $ml={5}><Undo /></Slot><Slot $ml={8}><Floppy /></Slot><Slot $ml={7}><NewDoc /></Slot><Slot $ml={8}><GreyX /></Slot>
      <ToolSep $ml={8} />
      <Slot $ml={6}><Refresh /></Slot><Slot $ml={9}><Windows4 /></Slot><ToolSep $ml={7} />
      <Slot $ml={5}><Printer /></Slot><Slot $ml={6}><Drop /></Slot><Slot $ml={5}><PrintList /></Slot><Slot $ml={6}><Drop /></Slot>
      <ToolSep $ml={5} /><ToolSep $ml={5} />
      <Slot $ml={7}><Arrow dir={-1} dbl /></Slot><Slot $ml={10}><Arrow dir={-1} /></Slot><Slot $ml={12}><Arrow dir={1} /></Slot><Slot $ml={14}><Arrow dir={1} dbl /></Slot>
      <ToolSep $ml={6} />
      <Slot $ml={5}><InfoIcon glyph="?" /></Slot><Slot $ml={8}><StopIcon /></Slot><ToolSep $ml={6} $h={13} />
    </DialogTools>
    <NumberPanel>
      <T $ml={11} $c={MAROON} $ls={-.32}>POS number</T>
      <FadeRule $w={654} $mt={2} $ml={23} />
      <Combo><T $c="#8a8a9c">1</T><Drop c="#b9b9e0" w={8} /></Combo>
    </NumberPanel>
    <Tabs>
      <Tab $w={98} $on><T $c={MAROON} $ls={-.37}>Receipt header</T></Tab>
      <Tab $w={89}><T $c="#55556a" $ls={-.35}>Receipt trailer</T></Tab>
      <Tab $w={79}><T $c="#55556a" $ls={-.25}>Advertising</T></Tab>
    </Tabs>
    <TabPanel>
      <FadeRule $w={648} $mt={21} $ml={23} />
      <PanelCols>
        <Fields>
          {headerFields.map((f, i) => <Field key={i} $pad={f.x}>{f.text && <T $ls={f.ls}>{f.text}</T>}{i === 0 && <Caret />}</Field>)}
        </Fields>
        <Side>
          <SpinRow><T $c={MAROON} $ls={-.45} $mt={7}>Receipt header lines</T><Spin><T $c={MAROON} $ls={-.6}>10</T><SpinArrows><UpTri c={MAROON} /><Drop c={MAROON} w={7} /></SpinArrows></Spin></SpinRow>
          <WideButton><T $c={MAROON} $ls={-.47}>Same header text for all POS</T></WideButton>
          <Receipt>{receipt.map((l, i) => <ReceiptLine key={i} $sel={i === 0}>{l}</ReceiptLine>)}</Receipt>
        </Side>
      </PanelCols>
    </TabPanel>
  </Dialog>
);

export default function App() {
  return (
    <Page>
      <Global />
      <TopBar>
        <IconCell $w={48} $edge="r"><HomeIcon /></IconCell>
        <IconCell $w={48} $edge="r"><SearchIcon /></IconCell>
        <TopCell $w={500}><TopText $ml={14}>Current Session: PH000000020P1</TopText><DottedRule /><TopText $ml={14}>1 session</TopText></TopCell>
        <Spacer />
        <TopCell $w={232} $edge="l"><Slot $ml={6}><ConsoleIcon /></Slot><TopText $ml={4} $size={12.15}>Desktop Representative Console</TopText></TopCell>
        <TopCell $w={88} $edge="l"><Slot $ml={12}><LogoutIcon /></Slot><TopText $ml={6} $size={12.15}>Logout</TopText></TopCell>
      </TopBar>
      <ToolBar>
        <ModeLabel>SCREEN SHARING<svg width="16" height="9"><path d="M0 .5h16L8 9z" fill="#fff" /></svg></ModeLabel>
        <Rule />
        <Slot $ml={27}><ViewScreenIcon /></Slot><Slot $ml={20}><MouseIcon /></Slot><Slot $ml={18}><PowerScreenIcon /></Slot>
        <Slot $ml={17}><BlocksIcon /></Slot><Slot $ml={18}><WandIcon /></Slot><Slot $ml={19}><KeyIcon /></Slot>
        <Spacer />
        <Slot $ml={0}><ClipboardIcon /></Slot><Slot $ml={21}><KeyboardIcon /></Slot><Slot $ml={14}><MultiMonitorIcon /></Slot>
        <Slot $ml={16}><FitIcon /></Slot><Slot $ml={18}><SplitIcon /></Slot><Slot $ml={22}><ExpandIcon /></Slot>
        <Rule $ml={33} />
        <Slot $ml={26}><PersonIcon sign="arrow" /></Slot><Slot $ml={12}><PersonIcon sign="plus" /></Slot><Slot $ml={12}><PersonIcon sign="minus" /></Slot>
        <Rule $ml={26} /><Slot $ml={26}><ChatIcon /></Slot><Rule $ml={26} /><Slot $ml={27}><CrossIcon /></Slot><Slot $ml={27} />
      </ToolBar>
      <Body>
        <Stage>
          <Remote>
            <MainWindow>
              <TitleBar $bg="#b3d9fd"><Slot $ml={4}><MiniPump /></Slot><T $ml={5} $ls={-.08} $c="#4a5462">NAMOS compact</T><Caption restore /></TitleBar>
              <MainBody><NavigatorStrip /><OverviewPane /></MainBody>
            </MainWindow>
            <TaskBar>
              <StartButton><Flag />Start</StartButton>
              <TaskList>
                <Task $kind="flat"><ExplorerIcon /></Task><Task $kind="up"><EvmanIcon /></Task><Task $kind="up"><ShieldIcon /></Task>
                <Task $kind="up"><PumpIcon /></Task><Task $kind="down"><PumpIcon hot /></Task>
              </TaskList>
              <Lang>FP</Lang>
              <Tray><TrayIcons><TrayArt /></TrayIcons><Clock>3:36 PM<br />3/31/2021</Clock><DisplayIcon /></Tray>
            </TaskBar>
            <PosDialog />
            <Watermark><WatermarkArt /></Watermark>
            <Cursor><svg width="14" height="17" viewBox="0 0 14 17"><path d="M7 2.500H4.500A3.500 3.500 0 1 0 7 9" fill="none" stroke="#111" strokeWidth="2" /><path d="M5 .5h3m2 0h3M9 1v14M5 15.500h3m2 0h3" stroke="#333" fill="none" /></svg></Cursor>
          </Remote>
        </Stage>
        <Chat>
          <ChatHead><CollapseIcon /><ChatTitle>Everyone</ChatTitle></ChatHead>
          <ChatScroll>
            <Messages>
              <MessageTail />
              {chatLog.map(([time, warn], i) => (
                <Message key={i} $lines={warn ? 3 : 2}>{`(${time}) [Patricio Calacasan] ${warn ? warnText : okText}`}</Message>
              ))}
            </Messages>
            <ScrollBar $h={595} $bg="#f0f0f0" $pt={17} $pb={0}><Chevron c="#606060" /><Thumb /><Chevron c="#606060" down /></ScrollBar>
          </ChatScroll>
          <ChatRule />
          <Composer><Hint>Type your message</Hint><ScrollBar $h={101} $bg="#f8f8f8" $pt={17} $pb={15}><Chevron c="#c3c3c3" /><Spacer /><Chevron c="#c3c3c3" down /></ScrollBar></Composer>
          <SendButton>SEND</SendButton>
        </Chat>
      </Body>
    </Page>
  );
}
